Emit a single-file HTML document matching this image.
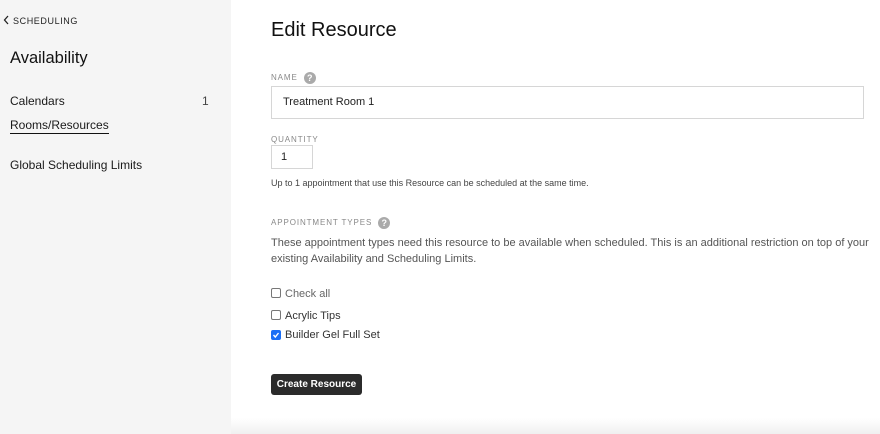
<!DOCTYPE html>
<html><head><meta charset="utf-8"><style>
*{margin:0;padding:0;box-sizing:border-box}
body{width:880px;height:434px;overflow:hidden;font-family:"Liberation Sans",Arial,sans-serif;background:#fff;position:relative;color:#1a1a1a}
.side{position:absolute;left:0;top:0;width:231px;height:434px;background:#f5f5f5}
.abs{position:absolute;white-space:nowrap}
.lbl{font-size:8px;letter-spacing:0.9px;color:#888}
.q{display:inline-block;width:12px;height:12px;border-radius:50%;background:#aaa;color:#fff;font-size:9px;font-weight:bold;text-align:center;line-height:12px;letter-spacing:0;vertical-align:middle;margin-left:6px}
.box{position:absolute;border:1px solid #d6d6d6;background:#fff;font-size:11px;color:#222}
.cb{position:absolute;width:10px;height:10px;border:1px solid #777;border-radius:2px;background:#fff}
.ct{font-size:11px;color:#333}
.bottom{position:absolute;left:231px;right:0;top:418px;height:16px;background:linear-gradient(#fff,#f0f0f0)}
</style></head><body>
<div class="side"></div>
<div class="abs" style="left:3px;top:15px;font-size:9px;letter-spacing:0.6px;color:#222"><svg width="7" height="10" viewBox="0 0 7 10" style="vertical-align:-1px;margin-right:3px"><path d="M5 1L1.5 5L5 9" fill="none" stroke="#222" stroke-width="1.3"/></svg>SCHEDULING</div>
<div class="abs" style="left:10px;top:49px;font-size:16.5px;color:#111">Availability</div>
<div class="abs" style="left:10px;top:94px;font-size:12px">Calendars</div>
<div class="abs" style="left:202px;top:94px;font-size:12px;color:#444">1</div>
<div class="abs" style="left:10px;top:118px;font-size:12px;border-bottom:1.5px solid #111;padding-bottom:1px">Rooms/Resources</div>
<div class="abs" style="left:10px;top:158px;font-size:12px">Global Scheduling Limits</div>

<div class="abs" style="left:271px;top:19px;font-size:20px;color:#111">Edit Resource</div>
<div class="abs lbl" style="left:271px;top:72px">NAME<span class="q">?</span></div>
<div class="box" style="left:271px;top:86px;width:593px;height:33px;padding:9px 11px">Treatment Room 1</div>
<div class="abs lbl" style="left:271px;top:135px">QUANTITY</div>
<div class="box" style="left:271px;top:145px;width:42px;height:24px;padding:5px 9px">1</div>
<div class="abs" style="left:271px;top:178px;font-size:9px;color:#444">Up to 1 appointment that use this Resource can be scheduled at the same time.</div>
<div class="abs lbl" style="left:271px;top:217px">APPOINTMENT TYPES<span class="q">?</span></div>
<div class="abs" style="left:271px;top:236px;font-size:11px;color:#555;line-height:15.5px">These appointment types need this resource to be available when scheduled. This is an additional restriction on top of your<br>existing Availability and Scheduling Limits.</div>
<div class="cb" style="left:271px;top:288px"></div><div class="abs ct" style="left:285px;top:288px;color:#666">Check all</div>
<div class="cb" style="left:271px;top:310px"></div><div class="abs ct" style="left:285px;top:310px">Acrylic Tips</div>
<div class="cb" style="left:271px;top:330px;background:#1a6ef5;border-color:#1a6ef5"><svg width="8" height="8" viewBox="0 0 8 8" style="position:absolute;left:0;top:0"><path d="M1.5 4L3.3 6L6.5 2" fill="none" stroke="#fff" stroke-width="1.4"/></svg></div><div class="abs ct" style="left:285px;top:329px">Builder Gel Full Set</div>
<div class="abs" style="left:271px;top:374px;width:91px;height:21px;background:#2b2b2b;border-radius:3px;color:#fff;font-size:10px;font-weight:bold;text-align:center;line-height:21px">Create Resource</div>
<div class="bottom"></div>
</body></html>
